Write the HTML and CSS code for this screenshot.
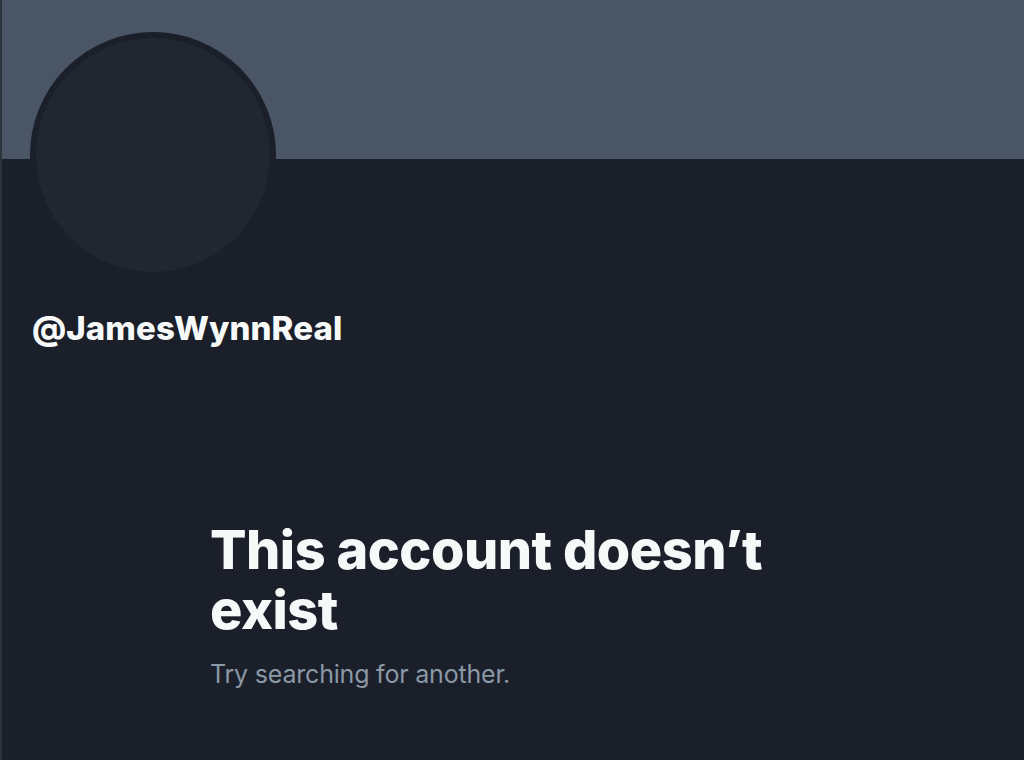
FILE: index.html
```html
<!DOCTYPE html>
<html lang="en">
<head>
    <meta charset="UTF-8">
    <meta name="viewport" content="width=device-width, initial-scale=1.0">
    <title>Profile</title>
    <link rel="stylesheet" href="styles.css">
</head>
<body>
    <div class="page">
        <div class="banner"></div>
        <div class="profile">
            <div class="avatar"></div>
            <div class="handle">@JamesWynnReal</div>
        </div>
        <div class="empty-state">
            <h1>This account doesn’t exist</h1>
            <p>Try searching for another.</p>
        </div>
    </div>
</body>
</html>
```

FILE: styles.css
```css
body {
    margin: 0;
    background-color: #1a1f2a;
    font-family: Inter, "Noto Sans", sans-serif;
}
.page {
    min-height: 760px;
    border-left: 2px solid #2c333d;
    box-sizing: border-box;
}
.banner {
    height: 159px;
    background-color: #4a5566;
}
.profile {
    padding-left: 28px;
}
.avatar {
    width: 234px;
    height: 234px;
    margin-top: -127px;
    border-radius: 50%;
    border: 6px solid #1a1f2a;
    background-color: #212731;
}
.handle {
    margin-top: 30px;
    color: #f7f9f9;
    font-size: 33px;
    font-weight: 800;
    letter-spacing: 0.1px;
    padding-left: 2px;
}
.empty-state {
    width: 600px;
    margin-top: 172px;
    margin-left: 208px;
}
h1 {
    margin: 0;
    color: #f7f9f9;
    font-size: 54px;
    line-height: 60px;
    font-weight: 800;
    letter-spacing: -0.5px;
}
p {
    margin: 19px 0 0;
    color: #8b98a5;
    font-size: 25px;
    letter-spacing: -0.2px;
}
```
